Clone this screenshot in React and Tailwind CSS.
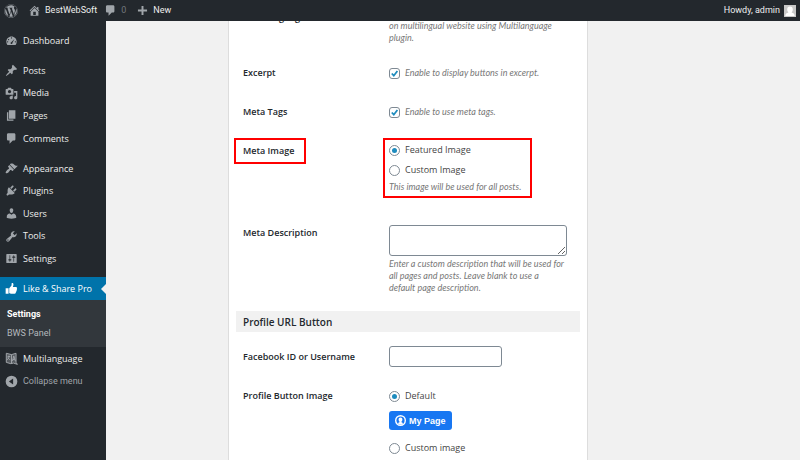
import React from 'react';
import clsx from 'clsx';
import { FaWordpress } from 'react-icons/fa';

const ICONS = {
  dashboard:
    'M3.76 17h12.48C17.34 15.63 18 13.89 18 12c0-4.41-3.58-8-8-8s-8 3.59-8 8c0 1.89.66 3.63 1.76 5zM9 6a1 1 0 1 1 2 0 1 1 0 0 1-2 0zM4.5 8.5a1 1 0 1 1 2 0 1 1 0 0 1-2 0zM8.5 14c0-.7.5-1.3 1.1-1.5L14.5 7.5l-3 6a1.5 1.5 0 0 1-3 .5zM3 12a1 1 0 1 1 2 0 1 1 0 0 1-2 0zm12 0a1 1 0 1 1 2 0 1 1 0 0 1-2 0z',
  home: 'M16 8.5l1.53 1.53-1.06 1.06L10 4.6l-6.47 6.49-1.06-1.06L10 2.5l4 4v-2h2v4zm-6-2.46l6 5.99V18H4v-5.97zM12 17v-5H8v5h4z',
  comments: 'M5 2h9c1.1 0 2 .9 2 2v7c0 1.1-.9 2-2 2h-2l-5 5v-5H5c-1.1 0-2-.9-2-2V4c0-1.1.9-2 2-2z',
  plus: 'M17 8.5v3h-5.5V17h-3v-5.5H3v-3h5.500V3h3v5.500z',
  posts:
    'M10.44 3.02l1.82-1.82 6.36 6.35-1.83 1.82c-1.05-.68-2.48-.57-3.41.36l-.75.75c-.92.93-1.04 2.35-.35 3.41l-1.83 1.82-2.41-2.41-2.8 2.79c-.42.42-3.38 2.71-3.8 2.29s1.86-3.39 2.28-3.81l2.79-2.79L4.1 9.36l1.83-1.82c1.05.69 2.48.57 3.4-.36l.75-.75c.93-.92 1.05-2.35.36-3.41z',
  media:
    'M13 11V4c0-.55-.45-1-1-1h-1.67L9 1H5L3.67 3H2c-.55 0-1 .45-1 1v7c0 .55.45 1 1 1h10c.55 0 1-.45 1-1zM7 4.5c1.38 0 2.5 1.12 2.5 2.5S8.38 9.5 7 9.5 4.5 8.38 4.5 7 5.62 4.5 7 4.5zM14 6h5v10.5c0 1.38-1.12 2.5-2.5 2.5S14 17.88 14 16.5s1.12-2.5 2.5-2.5c.17 0 .34.02.5.05V9h-3V6zm-4 8.05V13h2v3.5c0 1.38-1.12 2.5-2.5 2.5S7 17.88 7 16.5 8.12 14 9.5 14c.17 0 .34.02.5.05z',
  pages: 'M6 15V2h10v13H6zm-1 1h8v2H3V5h2v11z',
  appearance:
    'M14.48 11.06L7.41 3.99l1.5-1.5c.5-.56 2.3-.47 3.51.32 1.21.8 1.43 1.28 2.91 2.1 1.18.64 2.45 1.26 4.45.85zm-.71.71L6.7 4.7 4.93 6.47c-.39.39-.39 1.02 0 1.41l1.06 1.06c.39.39.39 1.03 0 1.42-.6.6-1.43 1.11-2.21 1.69-.35.26-.7.53-1.01.84C1.43 14.23.4 16.08 1.4 17.07c.99 1 2.84-.03 4.18-1.36.31-.31.58-.66.85-1.02.57-.78 1.08-1.61 1.69-2.21.39-.39 1.02-.39 1.41 0l1.06 1.06c.39.39 1.02.39 1.41 0z',
  plugins:
    'M13.11 4.36L9.87 7.6 8 5.73l3.24-3.24c.35-.34 1.05-.2 1.56.32.52.51.66 1.21.31 1.55zm-8 1.77l.91-1.12 9.01 9.01-1.19.84c-.71.71-2.63 1.16-3.82 1.16H6.14L4.9 17.26c-.59.59-1.54.59-2.12 0-.59-.58-.59-1.53 0-2.12l1.24-1.24v-3.88c0-1.13.4-3.19 1.09-3.89zm7.26 3.97l3.24-3.24c.34-.35 1.04-.21 1.55.31.52.51.66 1.21.31 1.55l-3.24 3.25z',
  users:
    'M10 9.25c-2.27 0-2.73-3.44-2.73-3.44C7 4.02 7.82 2 9.97 2c2.16 0 2.98 2.02 2.71 3.81 0 0-.41 3.44-2.68 3.44zm0 2.57L12.72 10c2.39 0 4.52 2.33 4.52 4.53v2.49s-3.65 1.13-7.24 1.13c-3.65 0-7.24-1.13-7.24-1.13v-2.49c0-2.25 1.94-4.48 4.47-4.48z',
  tools:
    'M16.68 9.77c-1.34 1.34-3.3 1.67-4.95.99l-5.41 6.52c-.99.99-2.59.99-3.58 0s-.99-2.59 0-3.57l6.52-5.42c-.68-1.65-.35-3.61.99-4.95 1.28-1.28 3.12-1.62 4.72-1.06l-2.89 2.89 2.82 2.82 2.86-2.87c.53 1.58.18 3.39-1.08 4.65zM3.81 16.21c.4.39 1.04.39 1.43 0 .4-.4.4-1.04 0-1.43-.39-.4-1.03-.4-1.43 0-.39.39-.39 1.03 0 1.43z',
  settings:
    'M18 16V4c0-.55-.45-1-1-1H3c-.55 0-1 .45-1 1v12c0 .55.45 1 1 1h14c.55 0 1-.45 1-1zM8 11h1c.55 0 1 .45 1 1s-.45 1-1 1H8v1.5c0 .28-.22.5-.5.5s-.5-.22-.5-.5V13H6c-.55 0-1-.45-1-1s.45-1 1-1h1V5.500c0-.28.22-.5.5-.5s.5.22.5.5V11zm5-2h-1c-.55 0-1-.45-1-1s.45-1 1-1h1V5.500c0-.28.22-.5.5-.5s.5.22.5.5V7h1c.55 0 1 .45 1 1s-.45 1-1 1h-1v5.500c0 .28-.22.5-.5.5s-.5-.22-.5-.5V9z',
  like: 'M1 9.500h4.500V18H1zM6.500 9.500L10 5.500 10.300 2c.1-.8 2.700-.6 2.700 1.800 0 1.500-.8 3.200-.8 3.700H17c1.300 0 1.800 1.200 1.200 2.100.6.7.5 1.700-.2 2.200.4.8.1 1.700-.6 2.100.3.8 0 1.600-.7 1.900.2 1.200-.6 2.200-1.900 2.200H9.500c-1.300 0-2-.6-3-1z',
  collapse: 'M10 1a9 9 0 1 1 0 18 9 9 0 0 1 0-18zM12.500 5.500L6 10l6.500 4.500z',
};

function Icon({ name, className }) {
  return (
    <svg viewBox="0 0 20 20" fill="currentColor" fillRule="evenodd" aria-hidden="true" className={clsx('size-[13px] shrink-0', className)}>
      <path d={ICONS[name]} />
    </svg>
  );
}

function LanguageIcon() {
  return (
    <svg viewBox="0 0 20 20" fill="none" stroke="currentColor" strokeWidth="1.500" aria-hidden="true" className="size-[13px] shrink-0">
      <path fill="currentColor" fillOpacity="0.4" d="M2 2l8 2 7-2v14l2 3-6-2-4 1-7-2z" />
      <path d="M10 4v13M4 7h4M6 5.500V7c0 2-1 4-3 5M4.500 8.500c1 2 2 3 3.500 3.500M11.500 14l2-8 2.500 8M12 11.500h3" />
    </svg>
  );
}

function MenuItem({ icon, children }) {
  return (
    <a href="#" className="flex flex-1 items-center gap-[5px] pl-[5px] text-[#eee]">
      <span className="text-[#a0a5aa]">{icon === 'language' ? <LanguageIcon /> : <Icon name={icon} />}</span>
      {children}
    </a>
  );
}

function AdminBar() {
  return (
    <header className="relative z-10 flex h-[21px] shrink-0 items-center justify-between bg-[#23282d] pr-1 font-['Roboto','Noto_Sans',sans-serif] text-[9px] text-[#eee]">
      <nav className="flex items-center">
        <a href="#" aria-label="About WordPress" className="pl-1 text-[#a0a5aa]">
          <FaWordpress className="size-[14px]" />
        </a>
        <a href="#" className="flex items-center gap-1 pl-[10px]">
          <Icon name="home" className="text-[#a0a5aa]" />
          BestWebSoft
        </a>
        <a href="#" className="flex items-center gap-1 pl-[7px] text-[#a0a5aa]">
          <Icon name="comments" />
          <span className="text-[#72777c]">0</span>
        </a>
        <a href="#" className="flex items-center gap-1 pl-[10px]">
          <Icon name="plus" className="text-[#a0a5aa]" />
          New
        </a>
      </nav>
      <a href="#" className="flex items-center gap-1">
        Howdy, admin
        <svg viewBox="0 0 12 12" aria-hidden="true" className="size-3">
          <path fill="#c8c8c8" d="M0 0h12v12H0z" />
          <path fill="#fff" d="M6 1.500c1.900 0 2.800 1.300 2.800 3S7.800 7.200 7.500 7.600C9.500 8 10.500 9 10.700 11H1.300C1.500 9 2.500 8 4.500 7.600 4.200 7.200 3.200 6.200 3.200 4.500s.9-3 2.800-3z" />
        </svg>
      </a>
    </header>
  );
}

function Sidebar() {
  return (
    <nav className="flex w-[106px] shrink-0 flex-col bg-[#23282d] pt-2 text-[9px]">
      <div className="flex h-[23px]">
        <MenuItem icon="dashboard">Dashboard</MenuItem>
      </div>
      <div className="mt-[7px] flex h-[91px] flex-col">
        <MenuItem icon="posts">Posts</MenuItem>
        <MenuItem icon="media">Media</MenuItem>
        <MenuItem icon="pages">Pages</MenuItem>
        <MenuItem icon="comments">Comments</MenuItem>
      </div>
      <div className="mt-[7px] flex h-[113px] flex-col">
        <MenuItem icon="appearance">Appearance</MenuItem>
        <MenuItem icon="plugins">Plugins</MenuItem>
        <MenuItem icon="users">Users</MenuItem>
        <MenuItem icon="tools">Tools</MenuItem>
        <MenuItem icon="settings">Settings</MenuItem>
      </div>
      <a href="#" className="mt-[7px] flex h-[23px] items-center gap-[5px] bg-[#0073aa] pl-[5px] text-white">
        <Icon name="like" />
        Like &amp; Share Pro
        <span className="ml-auto border-y-[5px] border-r-[5px] border-y-transparent border-r-[#f1f1f1]" />
      </a>
      <div className="flex h-[47px] flex-col justify-center gap-[6px] bg-[#32373c] pl-[7px] font-['Roboto','Noto_Sans',sans-serif] leading-[13px]">
        <a href="#" className="font-bold text-white">Settings</a>
        <a href="#" className="text-[#b4b9be]">BWS Panel</a>
      </div>
      <div className="flex h-[23px]">
        <MenuItem icon="language">Multilanguage</MenuItem>
      </div>
      <button type="button" className="flex h-[23px] items-center gap-[5px] pl-[5px] font-['Roboto','Noto_Sans',sans-serif] text-[#a0a5aa]">
        <Icon name="collapse" />
        Collapse menu
      </button>
    </nav>
  );
}

function Row({ label, htmlFor, className, children }) {
  return (
    <div className={clsx('flex pl-[14px]', className)}>
      <div className="w-[146px] shrink-0 font-semibold text-[#23282d]">
        {htmlFor ? <label htmlFor={htmlFor}>{label}</label> : label}
      </div>
      <div className="min-w-0 flex-1 pr-[21px]">{children}</div>
    </div>
  );
}

function Hint({ children }) {
  return <p className="font-['Lato','Noto_Sans',sans-serif] text-[9px] leading-3 text-[#777] italic">{children}</p>;
}

function Check({ children }) {
  return (
    <label className="flex items-center gap-[5px] font-['Lato','Noto_Sans',sans-serif] text-[9px] leading-3 text-[#777] italic">
      <span className="grid">
        <input
          type="checkbox"
          defaultChecked
          className="peer col-start-1 row-start-1 size-[11px] appearance-none rounded-[3px] border border-[#7e8993] bg-white"
        />
        <svg viewBox="0 0 11 11" fill="none" stroke="#1e8cbe" strokeWidth="1.800" aria-hidden="true" className="pointer-events-none invisible col-start-1 row-start-1 size-[11px] peer-checked:visible">
          <path d="M2.800 5.500l2 2.200 3.600-4.700" />
        </svg>
      </span>
      {children}
    </label>
  );
}

function Radio({ name, checked, children }) {
  return (
    <label className="flex items-center gap-[5px] leading-3 text-[#444]">
      <input
        type="radio"
        name={name}
        defaultChecked={checked}
        className="size-[11px] appearance-none rounded-full border border-[#7e8993] bg-white bg-clip-content p-[2px] checked:bg-[#1e8cbe]"
      />
      {children}
    </label>
  );
}

export default function App() {
  return (
    <div className="flex h-screen flex-col overflow-hidden bg-[#f1f1f1] font-['Open_Sans','Noto_Sans',sans-serif]">
      <AdminBar />
      <div className="flex min-h-0 flex-1">
        <Sidebar />
        <main className="min-w-0 flex-1 pl-[122px]">
          <form className="-mt-[11px] max-w-[360px] border-x border-[#ddd] bg-white pb-10 text-[9px] leading-4">
            <Row label="Multilanguage">
              <div className="pt-[10px]">
                <Hint>on multilingual website using Multilanguage plugin.</Hint>
              </div>
            </Row>
            <Row label="Excerpt" className="mt-[21px]">
              <div className="pt-[2px]">
                <Check>Enable to display buttons in excerpt.</Check>
              </div>
            </Row>
            <Row label="Meta Tags" className="mt-[23px]">
              <div className="pt-[2px]">
                <Check>Enable to use meta tags.</Check>
              </div>
            </Row>
            <div className="mt-[18px] flex items-start pl-[5px]">
              <div className="mr-[77px] w-[72px] border-2 border-[#f00] py-[3px] pl-[7px] font-semibold text-[#23282d]">Meta Image</div>
              <div className="w-[149px] border-2 border-[#f00] pt-1 pb-[3px] pl-1">
                <div className="flex flex-col gap-2">
                  <Radio name="meta-image" checked>Featured Image</Radio>
                  <Radio name="meta-image">Custom Image</Radio>
                </div>
                <div className="pt-[5px]">
                  <Hint>This image will be used for all posts.</Hint>
                </div>
              </div>
            </div>
            <Row label="Meta Description" htmlFor="meta-description" className="mt-[27px]">
              <textarea id="meta-description" className="block h-[31px] w-[178px] rounded-[3px] border border-[#7e8993] bg-white px-1" />
              <div className="pt-[2px]">
                <Hint>Enter a custom description that will be used for all pages and posts. Leave blank to use a default page description.</Hint>
              </div>
            </Row>
            <h2 className="mx-[7px] mt-[17px] flex h-[21px] items-center bg-[#f1f1f1] px-[7px] text-[10px] font-semibold text-[#23282d]">Profile URL Button</h2>
            <Row label="Facebook ID or Username" htmlFor="facebook-id" className="mt-[14px] items-center">
              <input id="facebook-id" type="text" className="block h-[21px] w-[113px] rounded-[3px] border border-[#7e8993] bg-white px-1" />
            </Row>
            <Row label="Profile Button Image" className="mt-[21px]">
              <div className="flex flex-col items-start pt-[2px]">
                <Radio name="profile-image" checked>Default</Radio>
                <button type="button" className="mt-[9px] mb-3 flex h-[19px] items-center gap-[3px] rounded-[3px] bg-[#1877f2] px-[6px] font-['Liberation_Sans',Arial,sans-serif] text-[9px] font-bold text-white">
                  <svg viewBox="0 0 11 11" fill="none" stroke="currentColor" strokeWidth="1.400" aria-hidden="true" className="size-[11px]">
                    <circle cx="5.500" cy="5.500" r="4.800" />
                    <path fill="currentColor" stroke="none" d="M5.500 2.500c1.300 0 1.900.9 1.900 2S6.900 6.200 6.500 6.600v.6l1.500.8-.8 1.600H3.800L3 8l1.500-.8v-.6c-.4-.4-.9-1-.9-2.100s.6-2 1.900-2z" />
                  </svg>
                  My Page
                </button>
                <Radio name="profile-image">Custom image</Radio>
              </div>
            </Row>
          </form>
        </main>
      </div>
    </div>
  );
}
